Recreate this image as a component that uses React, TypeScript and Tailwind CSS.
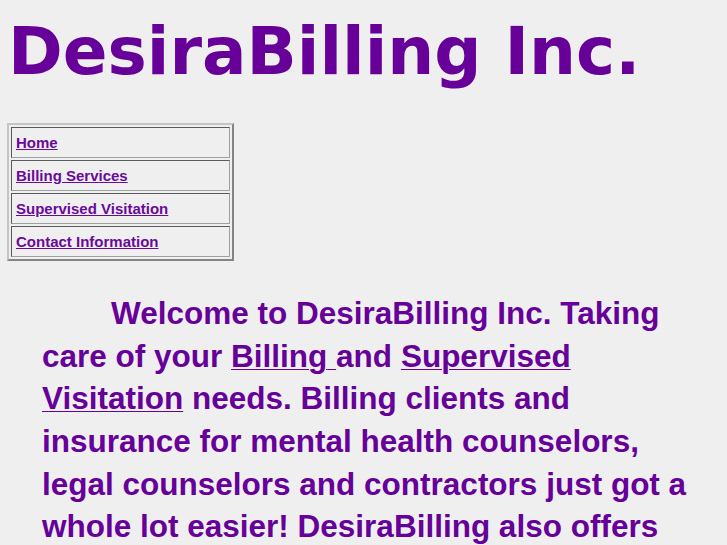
const navItems = ["Home", "Billing Services", "Supervised Visitation", "Contact Information"]

export default function App() {
  return (
    <div className="min-h-[545px] bg-[#efefef] px-2 pt-[13px] pb-4 text-[#660099]">
      {/* Title */}
      <h1 className="font-['DejaVu_Sans',sans-serif] text-[66px] font-bold leading-[77px]">DesiraBilling Inc.</h1>

      {/* Nav table */}
      <div className="mt-[33px] ml-[-1px] flex w-[227px] flex-col gap-[2px] border-2 border-t-[#c4c4c4] border-l-[#c4c4c4] border-r-[#848484] border-b-[#848484] p-[2px] font-['Liberation_Sans',Arial,sans-serif] text-[15px] font-bold">
        {navItems.map((item) => (
          <div
            key={item}
            className="border border-t-[#5a5a5a] border-l-[#5a5a5a] border-r-[#a0a0a0] border-b-[#a0a0a0] px-[4px] py-[6px] leading-[17px]"
          >
            <a href="#" className="text-[#6a0a9a] underline">
              {item}
            </a>
          </div>
        ))}
      </div>

      {/* Welcome text */}
      <p className="mt-[31px] ml-[34px] mr-0 indent-[69px] font-['Liberation_Sans',Arial,sans-serif] text-[31.5px] font-bold leading-[42.67px]">
        Welcome to DesiraBilling Inc. Taking care of your{" "}
        <a href="#" className="underline decoration-1 underline-offset-2">
          Billing{" "}
        </a>
        and{" "}
        <a href="#" className="underline decoration-1 underline-offset-2">
          Supervised Visitation
        </a>{" "}
        needs. Billing clients and insurance for mental health counselors, legal counselors and contractors just got a
        whole lot easier! DesiraBilling also offers Supervised Visitation services for families in need.
      </p>
    </div>
  )
}
